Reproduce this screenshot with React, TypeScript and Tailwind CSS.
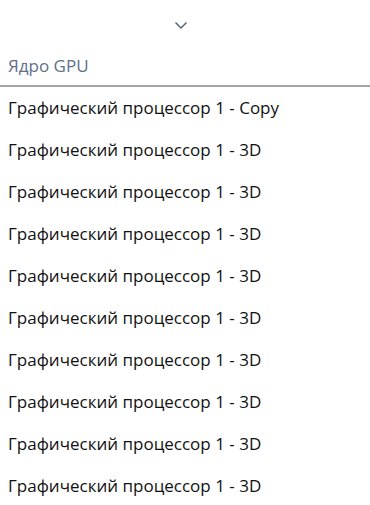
const rows = [
  'Графический процессор 1 - Copy',
  ...Array.from({ length: 9 }, () => 'Графический процессор 1 - 3D'),
]

export default function App() {
  return (
    <div className="w-[370px] h-[505px] overflow-hidden bg-white font-['Open_Sans',sans-serif]">
      <div className="flex justify-center pr-[8px] pt-[21px] h-[44px]">
        <svg width="14" height="9" viewBox="0 0 14 9" fill="none">
          <path d="M1.5 1.5 L7 7 L12.5 1.5" stroke="#4f5d72" strokeWidth="1.4" />
        </svg>
      </div>
      <div className="px-2 pt-[10px] pb-[8px] text-[17px] text-[#60708a] leading-[23px]">Ядро GPU</div>
      <div className="h-[2px] bg-[#a5a5a5]" />
      <ul className="pt-[8px]">
        {rows.map((label, i) => (
          <li key={i} className="px-2 h-[42px] text-[17px] leading-[26px] text-[#111111]">
            {label}
          </li>
        ))}
      </ul>
    </div>
  )
}
